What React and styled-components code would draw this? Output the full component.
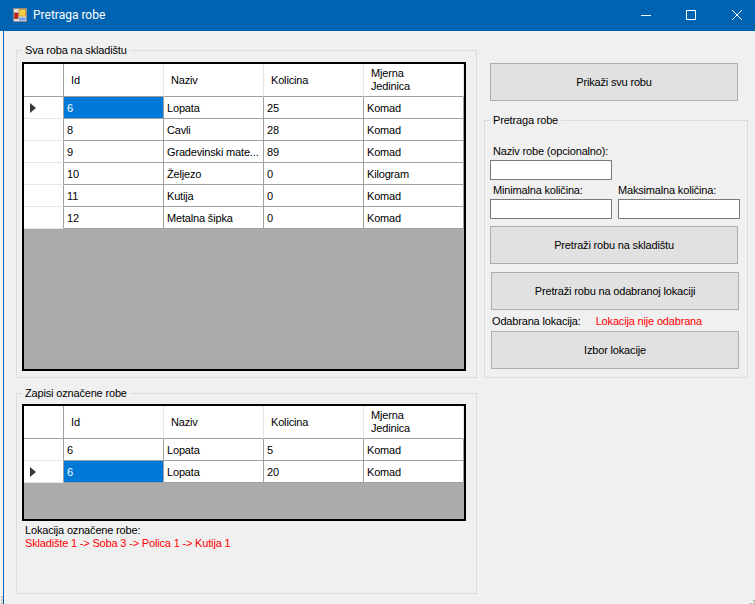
import React from "react";
import styled, { createGlobalStyle } from "styled-components";

const GlobalStyle = createGlobalStyle`
  html, body { margin: 0; padding: 0; }
  body { background: #f4f4f4; }
`;

const Screen = styled.div`
  position: relative;
  width: 755px;
  height: 604px;
  overflow: hidden;
  background: #f4f4f4;
  font-family: "Liberation Sans", Arial, sans-serif;
  font-size: 11px;
  letter-spacing: -0.17px;
  line-height: 14px;
  color: #000;
`;

const TitleBar = styled.div`
  height: 31px;
  display: flex;
  align-items: center;
  background: #0063b1;
  color: #fff;
  padding: 0 13px 1px;
  box-sizing: border-box;
`;

const TitleText = styled.span`
  margin-left: 6px;
  font-family: Roboto, sans-serif;
  font-size: 12px;
  letter-spacing: 0;
  flex: 1;
`;

const WindowButtons = styled.div`
  display: flex;
  align-items: center;
  gap: 35px;
  svg:last-child {
    margin-left: 1px;
  }
`;

const Client = styled.div`
  margin-left: 3px;
  height: 573px;
  box-sizing: border-box;
  border-left: 1px solid #0063b1;
  background: #f0f0f0;
  padding: 12px 0 0 12px;
  display: flex;
  gap: 7px;
`;

const LeftColumn = styled.div`
  width: 461px;
  display: flex;
  flex-direction: column;
  gap: 8px;
`;

const RightColumn = styled.div`
  width: 264px;
  padding-top: 20px;
`;

const Group = styled.fieldset`
  margin: 0;
  padding: ${(p) => p.$padding};
  min-width: 0;
  height: ${(p) => p.$height}px;
  box-sizing: border-box;
  border: 1px solid #dcdcdc;
  border-radius: 0;
`;

const GroupTitle = styled.legend`
  margin-left: 5px;
  padding: 0 3px;
  line-height: 14px;
`;

const DataGrid = styled.div`
  width: 444px;
  height: ${(p) => p.$height}px;
  margin-left: 5px;
  box-sizing: border-box;
  border: 2px solid #000;
  background: #ababab;
`;

const GridRow = styled.div`
  display: grid;
  grid-template-columns: 40px repeat(4, 100px);
  height: ${(p) => (p.$header ? 33 : 22)}px;
  background: #fff;
`;

const HeaderCell = styled.div`
  box-sizing: border-box;
  display: flex;
  align-items: center;
  padding: 0 7px;
  line-height: 13px;
  white-space: pre-line;
  border-bottom: 1px solid #a0a0a0;
  border-right: 1px solid ${(p) => (p.$corner ? "#a0a0a0" : "#e6e6e6")};
`;

const RowHeader = styled.div`
  box-sizing: border-box;
  display: flex;
  align-items: center;
  padding-left: 6px;
  border-right: 1px solid #a0a0a0;
  border-bottom: 1px solid #e6e6e6;
`;

const Cell = styled.div`
  box-sizing: border-box;
  display: flex;
  align-items: center;
  padding-left: 3px;
  white-space: nowrap;
  overflow: hidden;
  border-right: 1px solid #a0a0a0;
  border-bottom: 1px solid #a0a0a0;
  background: ${(p) => (p.$selected ? "#0078d7" : "#fff")};
  color: ${(p) => (p.$selected ? "#fff" : "#000")};
`;

const LocationBlock = styled.div`
  margin: 3px 0 0 8px;
  line-height: 13px;
`;

const Red = styled.span`
  color: #ff0000;
  display: ${(p) => (p.$block ? "block" : "inline")};
`;

const PushButton = styled.button`
  display: block;
  width: 248px;
  height: 38px;
  padding: 0;
  box-sizing: border-box;
  border: 1px solid #adadad;
  background: #e1e1e1;
  border-radius: 0;
  font: inherit;
  letter-spacing: inherit;
  color: #000;
`;

const TopButton = styled(PushButton)`
  margin: 0 0 12px 6px;
`;

const StockSearchButton = styled(PushButton)`
  margin-top: 7px;
`;

const SearchStack = styled.div`
  padding: 17px 0 0 5px;
`;

const FieldLabel = styled.label`
  display: block;
  padding-left: ${(p) => (p.$flush ? 0 : 3)}px;
`;

const TextInput = styled.input`
  display: block;
  width: 122px;
  height: 20px;
  margin: 2px 0 0;
  padding: 0;
  box-sizing: border-box;
  border: 1px solid #7a7a7a;
  border-radius: 0;
  background: #fff;
`;

const FieldRow = styled.div`
  display: flex;
  gap: 6px;
  margin-top: 3px;
`;

const LowerButtons = styled.div`
  margin-left: 1px;
  padding-top: 8px;
`;

const SelectedLocation = styled.div`
  display: flex;
  height: 21px;
  align-items: center;
  gap: 15px;
  padding-left: 1px;
`;

const GripMark = styled.svg`
  position: absolute;
  bottom: 0;
  ${(p) => (p.$right ? "right: 0;" : "left: 0;")}
`;

const COLUMNS = "Id|Naziv|Kolicina|Mjerna\nJedinica".split("|");

const STOCK = [
  ["6", "Lopata", "25", "Komad"],
  ["8", "Cavli", "28", "Komad"],
  ["9", "Gradevinski mate...", "89", "Komad"],
  ["10", "Željezo", "0", "Kilogram"],
  ["11", "Kutija", "0", "Komad"],
  ["12", "Metalna šipka", "0", "Komad"],
];

const RECORDS = [
  ["6", "Lopata", "5", "Komad"],
  ["6", "Lopata", "20", "Komad"],
];

const RowArrow = () => (
  <svg width="6" height="10" viewBox="0 0 6 10">
    <path d="M0 0 L6 5 L0 10 Z" fill="#3a3a3a" />
  </svg>
);

const AppIcon = () => (
  <svg width="14" height="14" viewBox="0 0 14 14">
    <rect x="0.5" y="0.5" width="13" height="13" fill="#e4e1da" stroke="#8c8c8c" />
    <rect x="6" y="1.5" width="6.5" height="6.5" fill="#f7d04a" stroke="#c98a10" strokeWidth="0.7" />
    <rect x="1.5" y="5" width="3.5" height="5.5" fill="#d8201c" stroke="#7a1410" strokeWidth="0.6" />
    <rect x="6" y="9.5" width="6.5" height="3" fill="#6f9fe8" />
  </svg>
);

const MinimizeIcon = () => (
  <svg width="10" height="10" viewBox="0 0 10 10">
    <path d="M0 5.5 H10" stroke="#fff" strokeWidth="1" />
  </svg>
);

const MaximizeIcon = () => (
  <svg width="10" height="10" viewBox="0 0 10 10">
    <rect x="0.5" y="0.5" width="9" height="9" fill="none" stroke="#fff" strokeWidth="1" />
  </svg>
);

const CloseIcon = () => (
  <svg width="10" height="10" viewBox="0 0 10 10">
    <path d="M0 0 L10 10 M10 0 L0 10" stroke="#fff" strokeWidth="1" />
  </svg>
);

const Table = ({ rows, current, height }) => (
  <DataGrid $height={height}>
    <GridRow $header>
      <HeaderCell $corner />
      {COLUMNS.map((name) => (
        <HeaderCell key={name}>{name}</HeaderCell>
      ))}
    </GridRow>
    {rows.map((row, i) => (
      <GridRow key={i}>
        <RowHeader>{i === current && <RowArrow />}</RowHeader>
        {row.map((value, c) => (
          <Cell key={c} $selected={i === current && c === 0}>
            {value}
          </Cell>
        ))}
      </GridRow>
    ))}
  </DataGrid>
);

export default function App() {
  return (
    <Screen>
      <GlobalStyle />
      <TitleBar>
        <AppIcon />
        <TitleText>Pretraga robe</TitleText>
        <WindowButtons>
          <MinimizeIcon />
          <MaximizeIcon />
          <CloseIcon />
        </WindowButtons>
      </TitleBar>
      <Client>
        <LeftColumn>
          <Group $height={335} $padding="5px 0 0 0">
            <GroupTitle>Sva roba na skladištu</GroupTitle>
            <Table rows={STOCK} current={0} height={309} />
          </Group>
          <Group $height={208} $padding="4px 0 0 0">
            <GroupTitle>Zapisi označene robe</GroupTitle>
            <Table rows={RECORDS} current={1} height={117} />
            <LocationBlock>
              Lokacija označene robe:
              <Red $block>Skladište 1 -&gt; Soba 3 -&gt; Polica 1 -&gt; Kutija 1</Red>
            </LocationBlock>
          </Group>
        </LeftColumn>
        <RightColumn>
          <TopButton>Prikaži svu robu</TopButton>
          <Group $height={265} $padding="0">
            <GroupTitle>Pretraga robe</GroupTitle>
            <SearchStack>
              <FieldLabel>Naziv robe (opcionalno):</FieldLabel>
              <TextInput />
              <FieldRow>
                <div>
                  <FieldLabel>Minimalna količina:</FieldLabel>
                  <TextInput />
                </div>
                <div>
                  <FieldLabel $flush>Maksimalna količina:</FieldLabel>
                  <TextInput />
                </div>
              </FieldRow>
              <StockSearchButton>Pretraži robu na skladištu</StockSearchButton>
              <LowerButtons>
                <PushButton>Pretraži robu na odabranoj lokaciji</PushButton>
                <SelectedLocation>
                  <span>Odabrana lokacija:</span>
                  <Red>Lokacija nije odabrana</Red>
                </SelectedLocation>
                <PushButton>Izbor lokacije</PushButton>
              </LowerButtons>
            </SearchStack>
          </Group>
        </RightColumn>
      </Client>
      <GripMark width="3" height="8" viewBox="0 0 3 8">
        <path d="M1 0h2v2H1zM1 3h2v2H1zM1 6h2v2H1z" fill="#c4c4c4" />
      </GripMark>
      <GripMark $right width="5" height="4" viewBox="0 0 5 4">
        <path d="M3 0h2v2H3zM0 3h2v1H0zM3 3h2v1H3z" fill="#b8b8b8" />
      </GripMark>
    </Screen>
  );
}
